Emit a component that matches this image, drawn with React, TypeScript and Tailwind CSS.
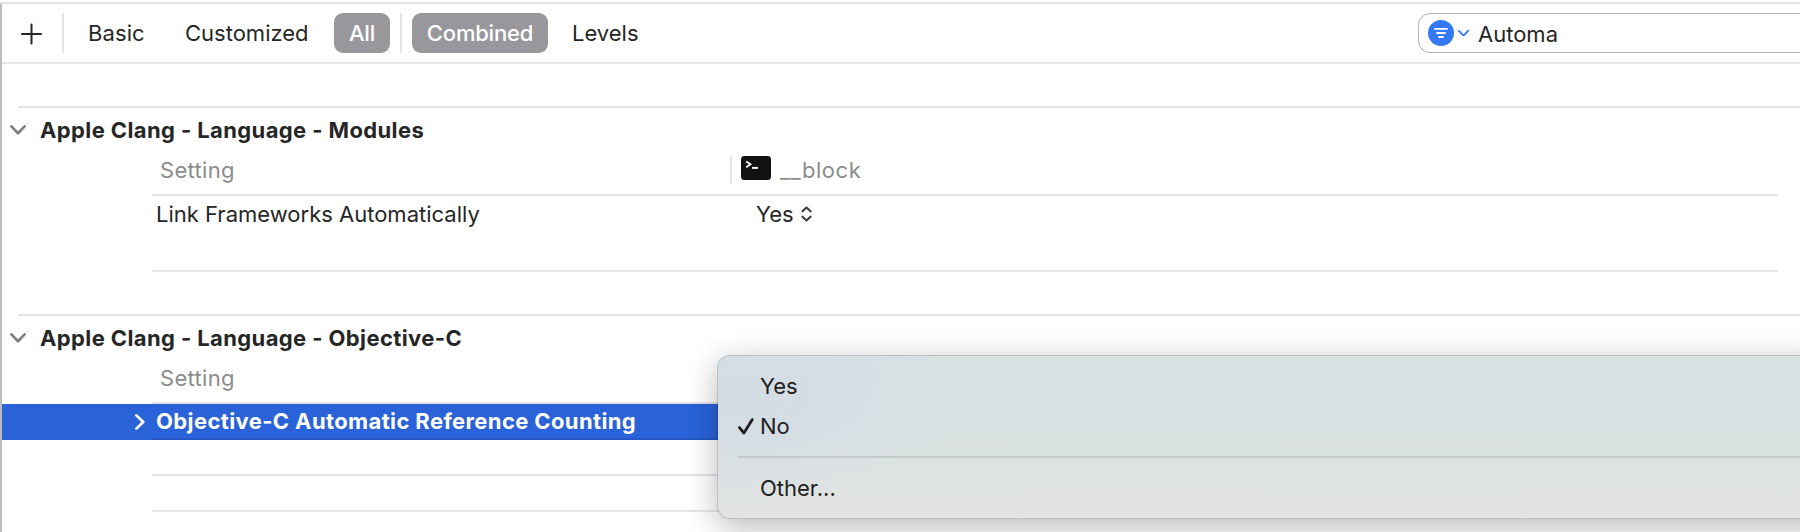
import React from "react";
import clsx from "clsx";

function Chevron({ className }: { className?: string }) {
  return (
    <svg viewBox="0 0 16 10" fill="none" stroke="currentColor" className={className}>
      <path d="M1.4 1.4 8 8.2l6.6-6.8" strokeWidth="2.7" strokeLinecap="round" strokeLinejoin="round" />
    </svg>
  );
}

function UpDownIcon() {
  return (
    <svg width="11" height="16" viewBox="0 0 11 16" fill="none" stroke="#404040" strokeWidth="2.2" strokeLinecap="round" strokeLinejoin="round">
      <path d="M1.5 5.3 5.5 1.5l4 3.8M1.5 10.7l4 3.8 4-3.8" />
    </svg>
  );
}

function TerminalIcon() {
  return (
    <svg width="30" height="24" viewBox="0 0 30 24" fill="none">
      <rect width="30" height="24" rx="3.5" fill="#111" />
      <path d="M5.2 5.4l4.3 2.9-4.3 2.9" stroke="#fff" strokeWidth="1.8" />
      <path d="M11 11.9h6" stroke="#fff" strokeWidth="1.9" />
    </svg>
  );
}

function FilterIcon() {
  return (
    <svg width="26" height="26" viewBox="0 0 26 26" fill="none">
      <circle cx="13" cy="13" r="13" fill="#3478f6" />
      <path d="M7 8.9h12M9 13h8M11 17h4" stroke="#fff" strokeWidth="1.9" strokeLinecap="round" />
    </svg>
  );
}

function Toolbar() {
  return (
    <header className="flex h-[60px] items-center border-b-2 border-[#e5e5e5]">
      <svg width="22" height="22" viewBox="0 0 22 22" className="ml-[18px] mt-0.5" stroke="#262626" strokeWidth="2" strokeLinecap="round">
        <path d="M11.5 1.5v19M2 11h19" />
      </svg>
      <div className="ml-5 h-10 w-0.5 bg-[#e5e5e5]" />
      <div className="ml-6 w-[97px] tracking-[0.1px]">Basic</div>
      <div className="w-[149px]">Customized</div>
      <div className="flex h-10 w-14 items-center justify-center rounded-[9px] bg-[#98979c] font-medium tracking-[-0.2px] text-white">
        All
      </div>
      <div className="ml-2.5 h-10 w-0.5 bg-[#e5e5e5]" />
      <div className="ml-2.5 flex h-10 w-[136px] items-center justify-center rounded-[9px] bg-[#98979c] font-medium tracking-[-0.2px] text-white">
        Combined
      </div>
      <div className="ml-6">Levels</div>
      <div className="-mr-5 ml-auto flex h-10 w-[402px] items-center rounded-[12px] border border-[#b0b0b0] pl-[9px]">
        <FilterIcon />
        <Chevron className="ml-1 w-[11px] text-[#3478f6]" />
        <span className="ml-[9px] mt-0.5">Automa</span>
      </div>
    </header>
  );
}

function SectionTitle({ title }: { title: string }) {
  return (
    <div className="ml-4 flex h-[46px] items-center border-t-2 border-[#e5e5e5]">
      <Chevron className="-ml-2 w-4 shrink-0 text-[#7f7f7f]" />
      <h2 className="ml-3.5 font-bold tracking-[0.39px]">{title}</h2>
    </div>
  );
}

function SettingHeader({ target }: { target?: string }) {
  return (
    <div className="ml-[150px] mr-[22px] flex h-11 items-center border-b-2 border-[#e5e5e5] pb-1.5 pl-2 text-[#8c8c8c]">
      <div className="w-[570px] tracking-[0.33px]">Setting</div>
      {target && (
        <div className="flex items-center">
          <div className="h-7 w-0.5 bg-[#e5e5e5]" />
          <div className="-mt-1 ml-[9px]">
            <TerminalIcon />
          </div>
          <span className="ml-[9px] tracking-[0.55px]">{target}</span>
        </div>
      )}
    </div>
  );
}

function MenuItem({ label, checked }: { label: string; checked?: boolean }) {
  return (
    <div className="flex h-10 items-center">
      <div className="w-[22px]">
        {checked && (
          <svg width="16" height="17" viewBox="0 0 16 17" fill="none" className="block">
            <path d="M1.5 9.6 5.9 15 14.3 1.6" stroke="#1f2121" strokeWidth="2.8" strokeLinecap="round" strokeLinejoin="round" />
          </svg>
        )}
      </div>
      {label}
    </div>
  );
}

function Menu() {
  return (
    <div className="absolute left-[717px] top-[355px] h-[164px] w-[1120px] overflow-hidden rounded-[13px] border border-black/25 bg-linear-to-b from-[#d9e1e3] via-[#d9e3e2] to-[#e3e3e2] bg-clip-padding text-[#1f2121] shadow-[0_8px_32px_rgba(0,0,0,0.28)]">
      <div className="h-full bg-[radial-gradient(ellipse_220px_110px_at_20px_40px,#d3dbe5,transparent)] pl-5 pt-[10px]">
        <MenuItem label="Yes" />
        <MenuItem label="No" checked />
        <div className="mb-[10px] mt-[10px] h-0.5 bg-[#c4caca]" />
        <MenuItem label="Other..." />
      </div>
    </div>
  );
}

const line = "ml-[150px] mr-[22px] border-b-2 border-[#e5e5e5]";

export default function App() {
  return (
    <div className="relative h-[532px] w-full overflow-hidden bg-white font-['Inter',sans-serif] text-[22px] leading-none text-[#262626]">
      <div className="mt-0.5 h-0.5 bg-[#e5e5e5]" />
      <div className="h-[528px] border-l-2 border-[#bcbcbc]">
        <Toolbar />
        <main className="pt-[42px]">
          <SectionTitle title="Apple Clang - Language - Modules" />
          <SettingHeader target="__block" />
          <div className={clsx(line, "h-[76px]")}>
            <div className="flex h-9 items-center pl-1">
              <div className="w-[600px]">Link Frameworks Automatically</div>
              <span className="mr-[7px]">Yes</span>
              <UpDownIcon />
            </div>
          </div>
          <div className="h-[42px]" />
          <SectionTitle title="Apple Clang - Language - Objective-C" />
          <SettingHeader />
          <div className="flex h-9 bg-[#2962d9] text-white">
            <div className="flex w-[150px] items-center justify-end pr-1">
              <Chevron className="w-4 -rotate-90" />
            </div>
            <div className="flex flex-1 items-center border-b-2 border-[#2558c4] pl-1 font-bold tracking-[0.38px]">
              Objective-C Automatic Reference Counting
            </div>
          </div>
          <div className={clsx(line, "h-9")} />
          <div className={clsx(line, "h-9")} />
        </main>
      </div>
      <Menu />
    </div>
  );
}
